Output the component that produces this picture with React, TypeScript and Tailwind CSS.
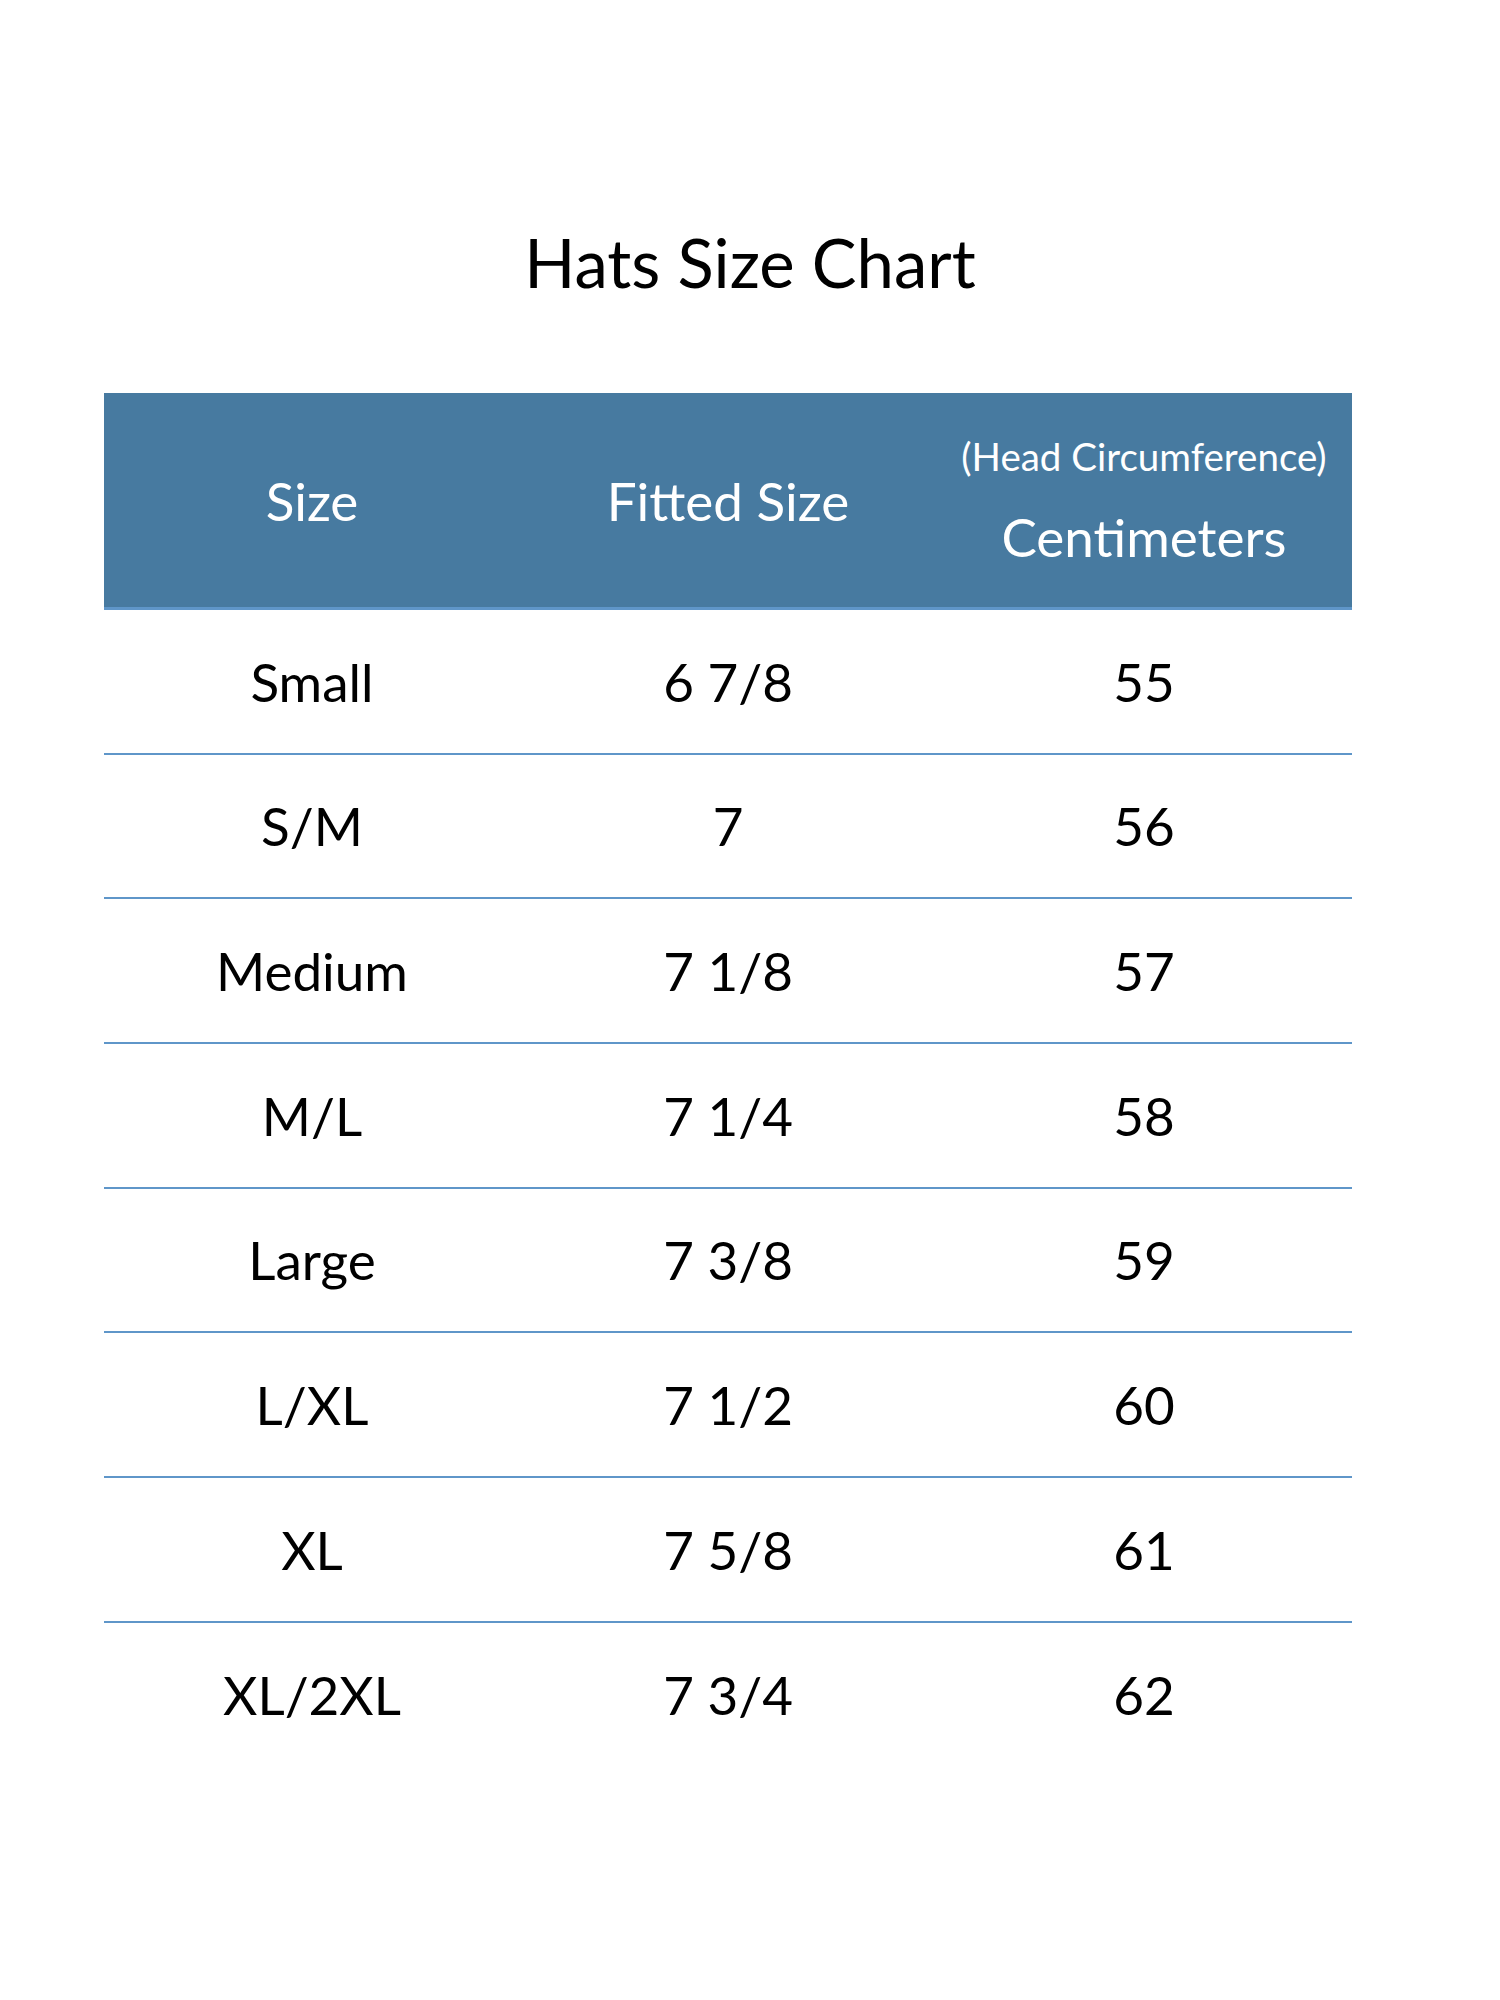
import React from "react";

const rows: [string, string, string][] = [
  ["Small", "6 7/8", "55"],
  ["S/M", "7", "56"],
  ["Medium", "7 1/8", "57"],
  ["M/L", "7 1/4", "58"],
  ["Large", "7 3/8", "59"],
  ["L/XL", "7 1/2", "60"],
  ["XL", "7 5/8", "61"],
  ["XL/2XL", "7 3/4", "62"],
];

export default function App() {
  return (
    <div
      className="w-[1500px] min-h-[2000px] bg-white text-black"
      style={{ fontFamily: "Lato, 'Open Sans', sans-serif" }}
    >
      <div className="pt-[229px] text-center text-[67px] leading-none">Hats Size Chart</div>
      <div className="ml-[104px] mt-[97px] w-[1248px]">
        <div className="flex h-[217px] border-b-[3px] border-[#5f96c9] bg-[#477aa0] text-white">
          <div className="flex w-1/3 items-center justify-center text-[53px] leading-none">Size</div>
          <div className="flex w-1/3 items-center justify-center text-[53px] leading-none">Fitted Size</div>
          <div className="flex w-1/3 flex-col items-center justify-center">
            <div className="text-[38.5px] leading-none">(Head Circumference)</div>
            <div className="mt-[34px] text-[53px] leading-none">Centimeters</div>
          </div>
        </div>
        {rows.map((r, i) => (
          <div
            key={r[0]}
            className={
              "flex h-[144.67px] items-center text-[53px] leading-none " +
              (i < rows.length - 1 ? "border-b-2 border-[#5f96c9]" : "")
            }
          >
            <div className="w-1/3 text-center">{r[0]}</div>
            <div className="w-1/3 text-center">{r[1]}</div>
            <div className="w-1/3 text-center">{r[2]}</div>
          </div>
        ))}
      </div>
    </div>
  );
}
